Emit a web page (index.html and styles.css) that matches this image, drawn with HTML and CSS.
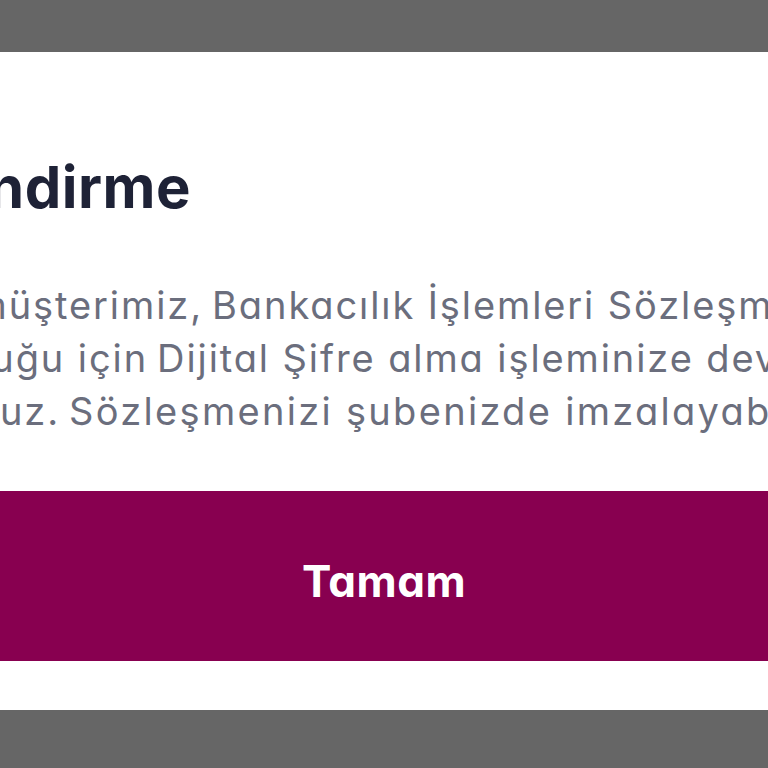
FILE: index.html
```html
<!DOCTYPE html>
<html lang="tr">
<head>
<meta charset="utf-8">
<title>Bilgilendirme</title>
<link rel="stylesheet" href="styles.css">
</head>
<body>
<div class="screen">
  <div class="dialog">
    <div class="title-row"><h1 class="title">Bilgilendirme</h1></div>
    <div class="message">
      <div class="line"><div class="pre pre-1"><span>Değerli müşterimiz,</span></div><span class="rest">Bankacılık İşlemleri Sözleşmeniz</span></div>
      <div class="line"><div class="pre pre-2"><span>eksik olduğu için</span></div><span class="rest">Dijital Şifre alma işleminize devam</span></div>
      <div class="line"><div class="pre pre-3"><span>edemiyoruz.</span></div><span class="rest">Sözleşmenizi şubenizde imzalayabilirsiniz.</span></div>
    </div>
    <div class="actions"><button class="ok">Tamam</button></div>
  </div>
</div>
</body>
</html>
```
FILE: styles.css
```css
html, body {
  margin: 0;
  padding: 0;
  background: #666666;
}
.screen {
  width: 768px;
  height: 768px;
  overflow: hidden;
  padding-top: 52px;
  box-sizing: border-box;
}
.dialog {
  background: #ffffff;
  height: 658px;
  padding-top: 100px;
  box-sizing: border-box;
  overflow: hidden;
  font-family: Inter, "Noto Sans", sans-serif;
  font-feature-settings: "cv11" 1;
}
.title-row {
  width: 191px;
  display: flex;
  justify-content: flex-end;
  height: 70px;
}
.title {
  margin: 0;
  font-size: 58px;
  line-height: 70px;
  font-weight: 700;
  color: #1e2236;
  white-space: nowrap;
  flex: none;
  letter-spacing: 0.5px;
}
.message {
  margin-top: 57px;
  font-size: 38px;
  line-height: 53px;
  color: #6b6e7d;
  letter-spacing: 1.9px;
}
.line {
  display: flex;
  gap: 0.24em;
  white-space: nowrap;
}
.pre {
  display: flex;
  justify-content: flex-end;
  flex: none;
}
.pre span { flex: none; }
.pre-1 { width: 203px; }
.pre-2 { width: 148px; }
.pre-3 { width: 60px; }
.rest { flex: none; }
.pre-3 + .rest { letter-spacing: 2.3px; }
.actions {
  margin-top: 53px;
}
.ok {
  display: flex;
  align-items: center;
  justify-content: center;
  width: 100%;
  height: 170px;
  border: none;
  margin: 0;
  padding: 10px 0 0 0;
  background: #880050;
  color: #ffffff;
  font-family: Inter, "Noto Sans", sans-serif;
  font-feature-settings: "cv11" 1;
  font-size: 44px;
  font-weight: 700;
  letter-spacing: 0.5px;
}
```
